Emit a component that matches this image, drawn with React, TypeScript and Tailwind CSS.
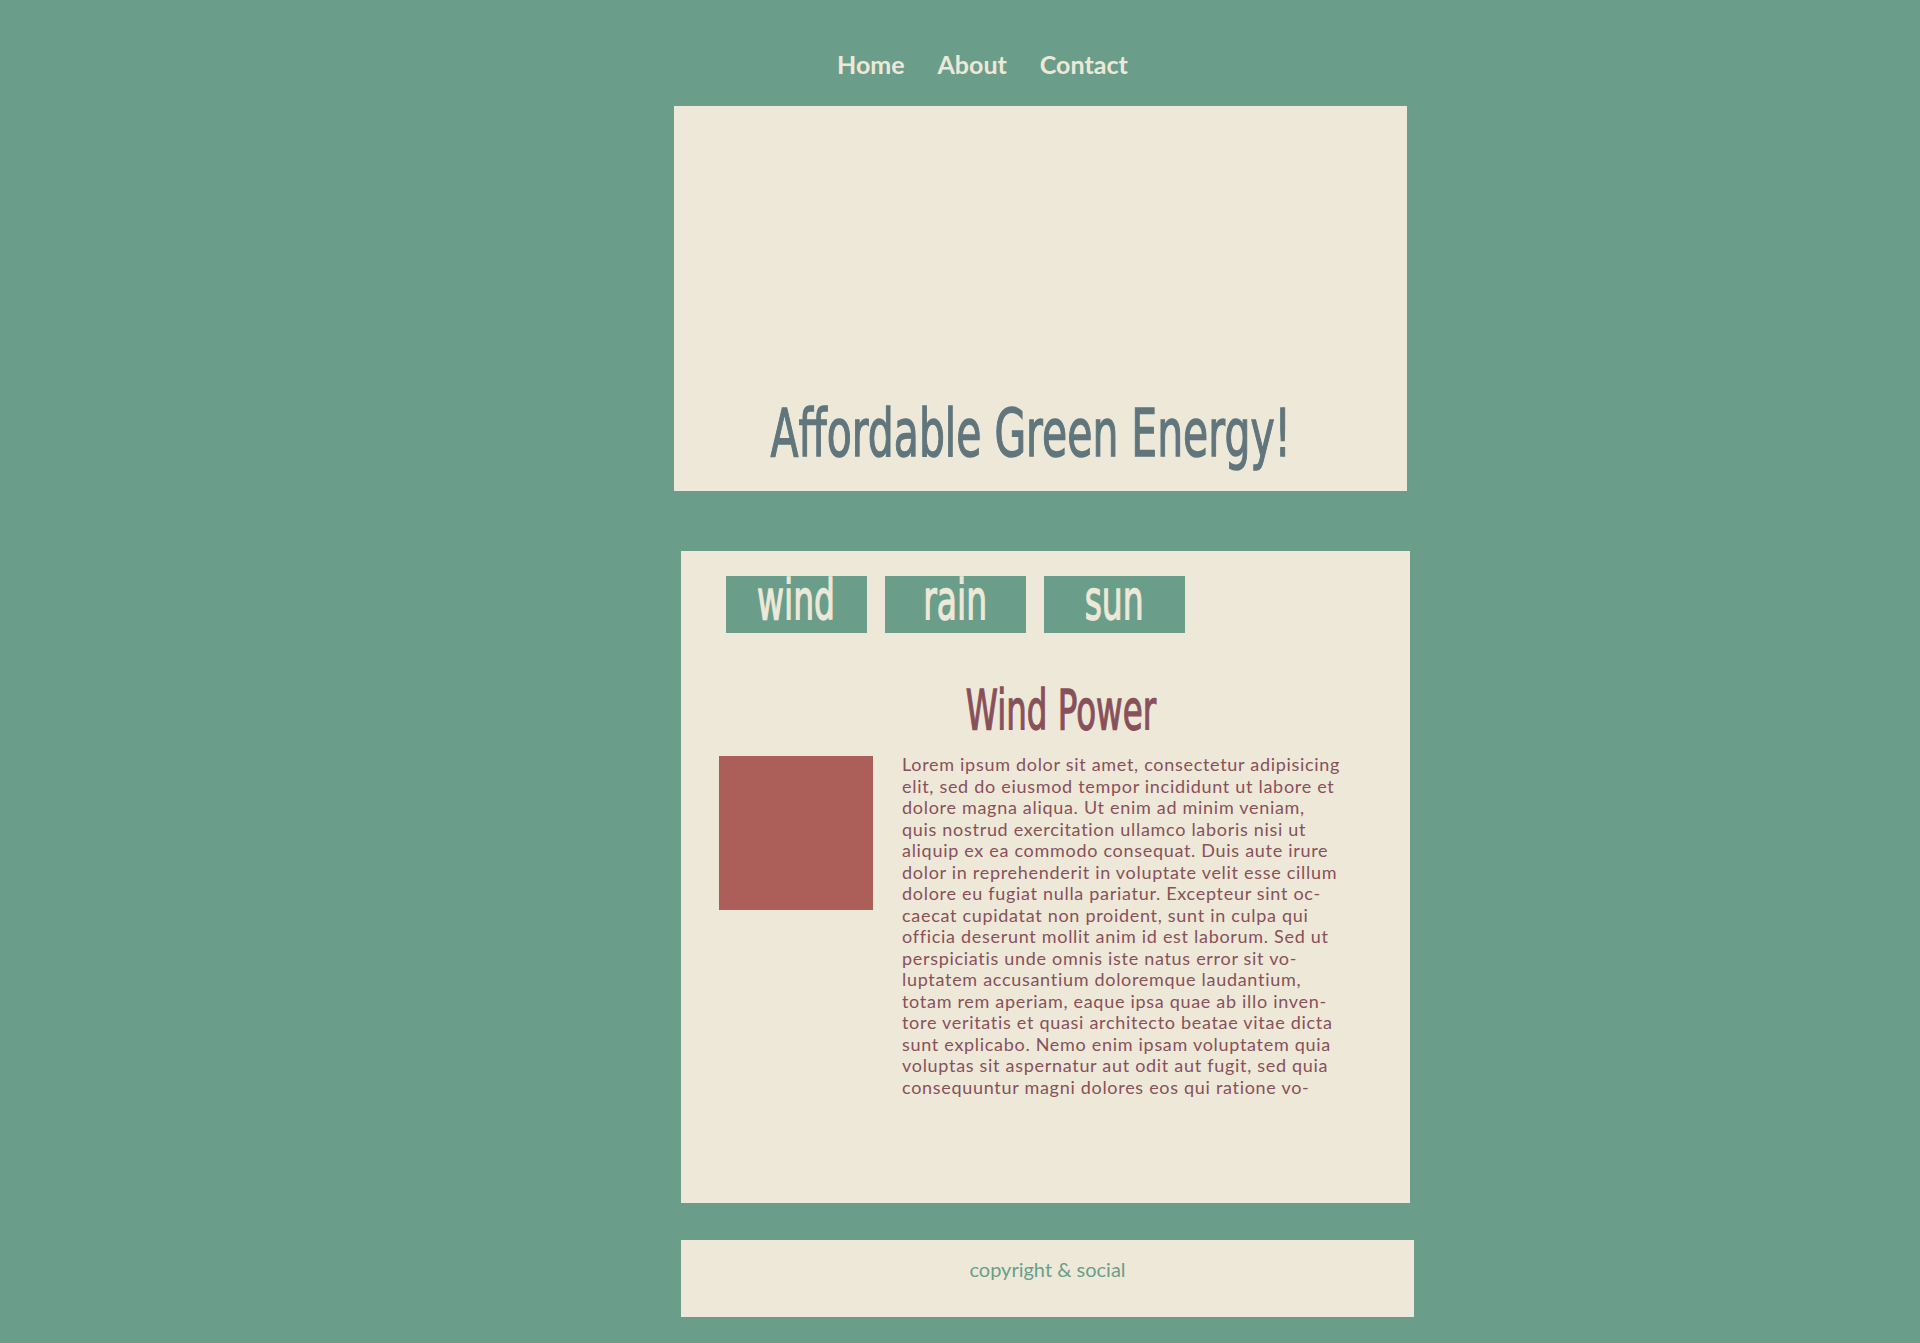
const bodyFont = "font-['Lato','Open_Sans',sans-serif]";
const condFont = "font-['DejaVu_Sans',sans-serif] [-webkit-text-stroke:1.4px_currentColor]";

const lines = [
  "Lorem ipsum dolor sit amet, consectetur adipisicing",
  "elit, sed do eiusmod tempor incididunt ut labore et",
  "dolore magna aliqua. Ut enim ad minim veniam,",
  "quis nostrud exercitation ullamco laboris nisi ut",
  "aliquip ex ea commodo consequat. Duis aute irure",
  "dolor in reprehenderit in voluptate velit esse cillum",
  "dolore eu fugiat nulla pariatur. Excepteur sint oc-",
  "caecat cupidatat non proident, sunt in culpa qui",
  "officia deserunt mollit anim id est laborum. Sed ut",
  "perspiciatis unde omnis iste natus error sit vo-",
  "luptatem accusantium doloremque laudantium,",
  "totam rem aperiam, eaque ipsa quae ab illo inven-",
  "tore veritatis et quasi architecto beatae vitae dicta",
  "sunt explicabo. Nemo enim ipsam voluptatem quia",
  "voluptas sit aspernatur aut odit aut fugit, sed quia",
  "consequuntur magni dolores eos qui ratione vo-",
];

const tabs = ["wind", "rain", "sun"];

function App() {
  return (
    <div className={`min-h-screen w-full bg-[#6a9e8a] ${bodyFont}`}>
      <nav className="flex gap-[33px] pl-[837px] pt-[49px] text-[25px] leading-[30px] font-bold text-[#eee8d8]">
        <a>Home</a>
        <a>About</a>
        <a>Contact</a>
      </nav>

      <div className="ml-[674px] w-[740px] flex flex-col">
        <header className="mt-[27px] w-[733px] h-[385px] bg-[#eee8d9] flex items-end justify-center pr-[20px] pb-[24px]">
          <h1
            className={`${condFont} whitespace-nowrap inline-block scale-x-[0.62] text-[66px] leading-none text-[#60767c]`}
          >
            Affordable Green Energy!
          </h1>
        </header>

        <main className="mt-[60px] ml-[7px] w-[729px] h-[652px] bg-[#eee8d9] pt-[25px] pl-[45px] pr-[40px]">
          <div className="flex gap-[18px]">
            {tabs.map((t) => (
              <button
                key={t}
                className="w-[141px] h-[57px] bg-[#6a9e8a] flex justify-center items-start"
              >
                <span
                  className={`${condFont} inline-block scale-x-[0.6] text-[55px] leading-[48px] text-[#eee8d8]`}
                >
                  {t}
                </span>
              </button>
            ))}
          </div>

          <div className="mt-[47px] flex justify-center pl-[25px]">
            <h2
              className={`${condFont} inline-block whitespace-nowrap scale-x-[0.58] text-[56px] leading-[60px] text-[#88515a]`}
            >
              Wind Power
            </h2>
          </div>

          <div className="mt-[16px] -ml-[7px] flex gap-[29px]">
            <div className="w-[154px] h-[154px] shrink-0 bg-[#ab5f58]" />
            <p className="-mt-[2px] text-[18px] leading-[21.5px] tracking-[0.7px] text-[#88515a]">
              {lines.map((l, i) => (
                <span key={i} className="block whitespace-nowrap">
                  {l}
                </span>
              ))}
            </p>
          </div>
        </main>

        <footer className="mt-[37px] ml-[7px] w-[733px] h-[77px] bg-[#eee8d9] flex justify-center pt-[17px]">
          <span className="text-[20px] leading-[24px] text-[#6a9e8a]">
            copyright &amp; social
          </span>
        </footer>
      </div>
    </div>
  );
}

export default App;
